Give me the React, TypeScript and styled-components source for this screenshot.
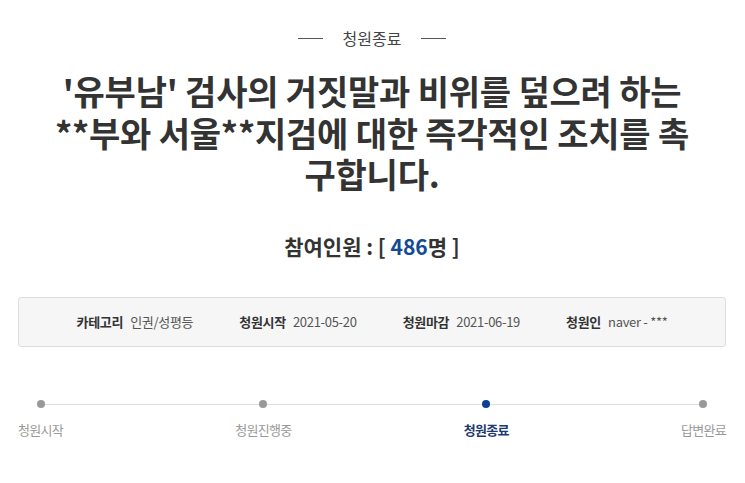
import React from "react";
import styled, { createGlobalStyle } from "styled-components";

const Global = createGlobalStyle`
  html, body { margin: 0; padding: 0; background: #fff; }
  body { font-family: "Noto Sans CJK KR", "Noto Sans", sans-serif; color: #333; }
  * { box-sizing: border-box; }
`;

const Page = styled.div`
  width: 745px;
  padding: 0 19px 0 18px;
  display: flex;
  flex-direction: column;
  align-items: stretch;
`;

const StatusHead = styled.div`
  margin-top: 26px;
  display: flex;
  align-items: center;
  justify-content: center;
  gap: 20px;
  font-size: 16px;
  line-height: 24px;
  color: #444;
`;

const Dash = styled.span`
  width: 25px;
  height: 1px;
  background: #555;
`;

const Title = styled.h1`
  margin: 20px auto 0;
  max-width: 646px;
  font-size: 34px;
  line-height: 41.5px;
  font-weight: 700;
  text-align: center;
  color: #333;
  letter-spacing: -0.2px;
`;

const Count = styled.div`
  margin-top: 37px;
  text-align: center;
  font-size: 21px;
  font-weight: 700;
  line-height: 28px;
  color: #333;
`;

const Num = styled.span`
  color: #144a94;
`;

const InfoBox = styled.div`
  margin-top: 37px;
  height: 50px;
  border: 1px solid #ddd;
  border-radius: 3px;
  background: #f6f6f6;
  display: flex;
  align-items: center;
  justify-content: center;
  gap: 46px;
  font-size: 13px;
  letter-spacing: -0.3px;
`;

const InfoItem = styled.div`
  display: flex;
  align-items: center;
  gap: 7px;
`;

const InfoLabel = styled.span`
  font-weight: 700;
  color: #333;
`;

const InfoValue = styled.span`
  color: #555;
`;

const Steps = styled.div`
  position: relative;
  margin-top: 53px;
  display: flex;
  justify-content: space-between;
`;

const Track = styled.div`
  position: absolute;
  left: 23px;
  right: 24px;
  top: 4px;
  height: 1px;
  background: #ddd;
`;

const Step = styled.div`
  position: relative;
  display: flex;
  flex-direction: column;
  align-items: center;
  gap: 13px;
`;

const Dot = styled.span<{ $active?: boolean }>`
  width: 8px;
  height: 8px;
  border-radius: 50%;
  background: ${(p) => (p.$active ? "#0d3f92" : "#999")};
`;

const StepLabel = styled.span<{ $active?: boolean }>`
  font-size: 13px;
  letter-spacing: -0.7px;
  line-height: 18px;
  color: ${(p) => (p.$active ? "#1d3b6e" : "#999")};
  font-weight: ${(p) => (p.$active ? 700 : 400)};
`;

const steps = [
  { label: "청원시작" },
  { label: "청원진행중" },
  { label: "청원종료", active: true },
  { label: "답변완료" },
];

const info = [
  ["카테고리", "인권/성평등"],
  ["청원시작", "2021-05-20"],
  ["청원마감", "2021-06-19"],
  ["청원인", "naver - ***"],
];

export default function App() {
  return (
    <>
      <Global />
      <Page>
        <StatusHead>
          <Dash />
          <span>청원종료</span>
          <Dash />
        </StatusHead>
        <Title>
          '유부남' 검사의 거짓말과 비위를 덮으려 하는 **부와 서울**지검에 대한 즉각적인 조치를 촉구합니다.
        </Title>
        <Count>
          참여인원 : [ <Num>486</Num>명 ]
        </Count>
        <InfoBox>
          {info.map(([l, v]) => (
            <InfoItem key={l}>
              <InfoLabel>{l}</InfoLabel>
              <InfoValue>{v}</InfoValue>
            </InfoItem>
          ))}
        </InfoBox>
        <Steps>
          <Track />
          {steps.map((s) => (
            <Step key={s.label}>
              <Dot $active={s.active} />
              <StepLabel $active={s.active}>{s.label}</StepLabel>
            </Step>
          ))}
        </Steps>
      </Page>
    </>
  );
}
